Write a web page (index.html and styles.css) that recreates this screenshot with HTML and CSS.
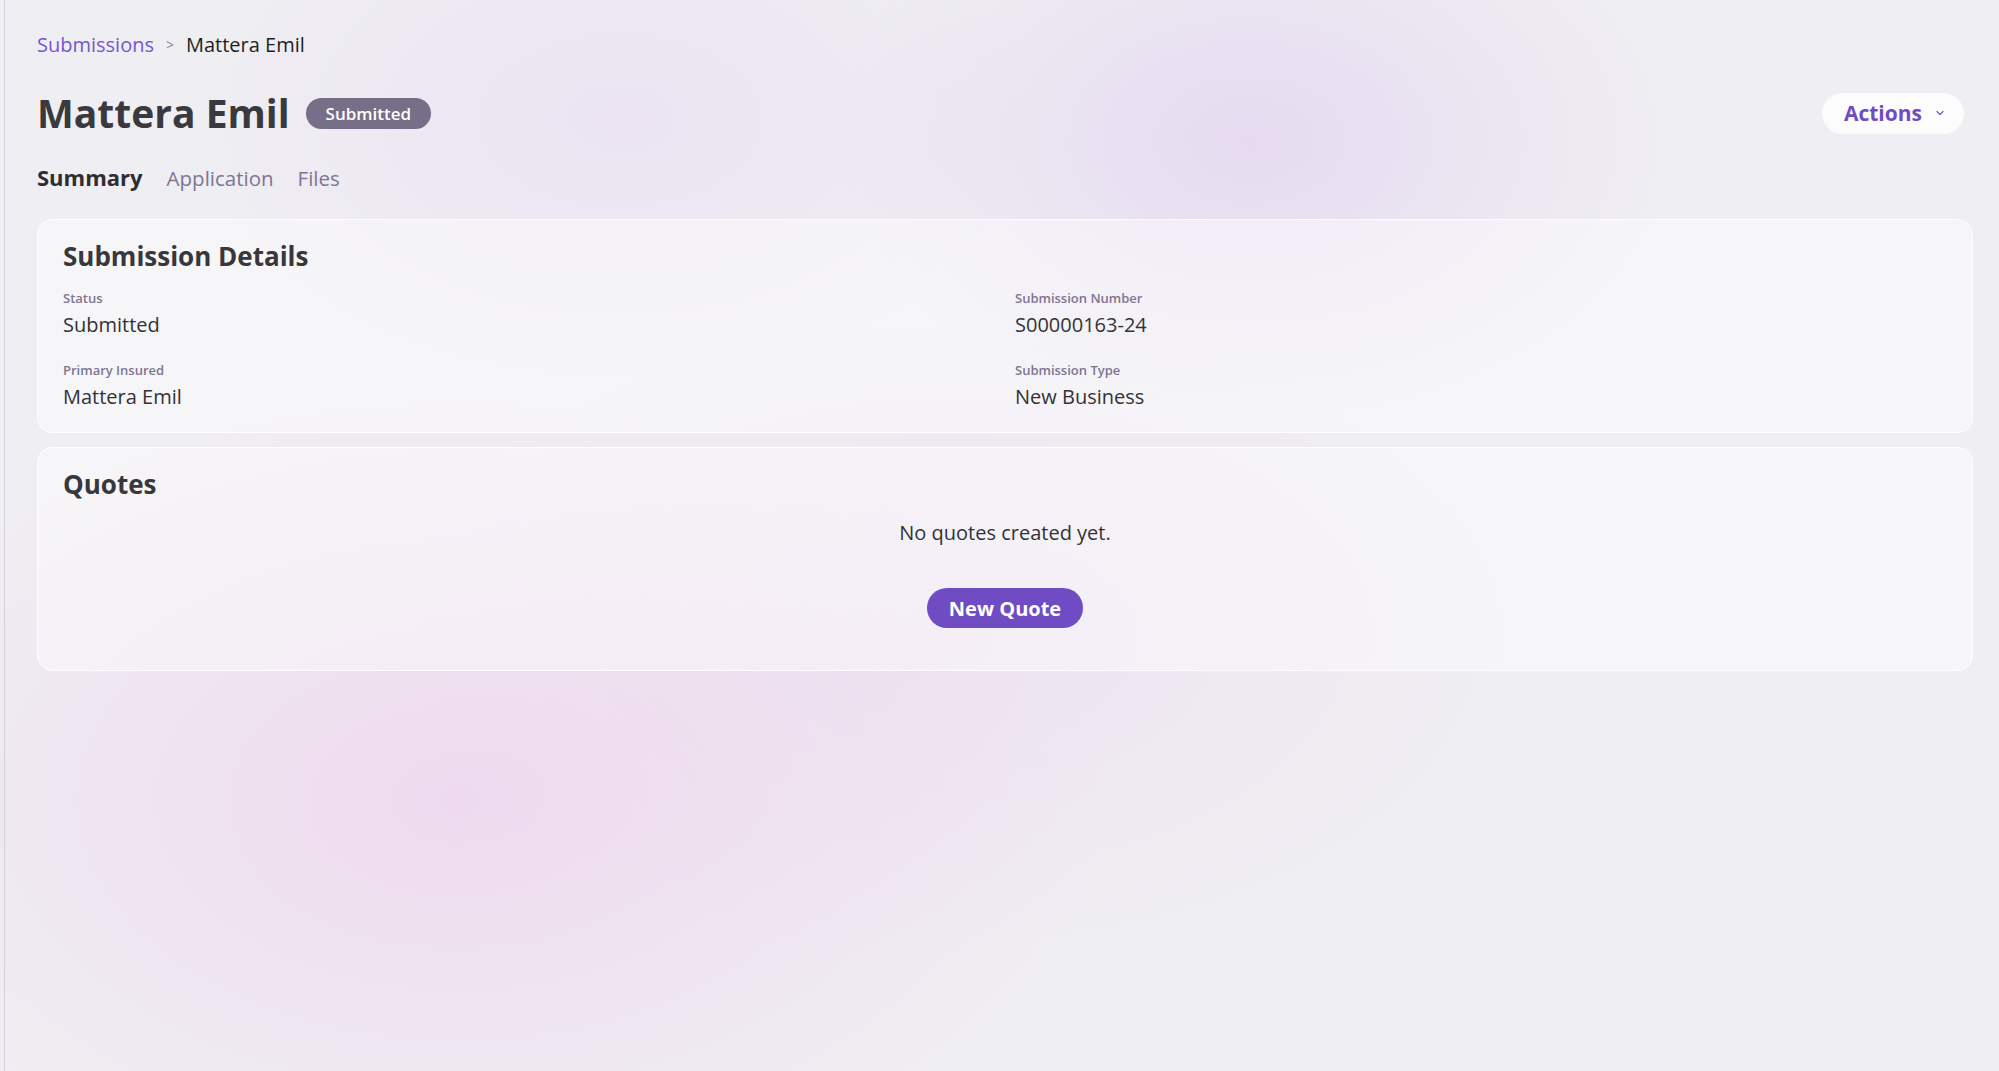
FILE: index.html
```html
<!DOCTYPE html>
<html>
<head>
    <title>Mattera Emil - Submission</title>
    <link rel="stylesheet" href="styles.css">
</head>
<body>
    <div class="shell">
        <div class="rail"></div>
        <main class="page">
            <nav class="crumbs">
                <a href="#" class="crumb-link">Submissions</a>
                <span class="crumb-sep">&gt;</span>
                <span class="crumb-current">Mattera Emil</span>
            </nav>

            <header class="title-row">
                <div class="title-left">
                    <h1>Mattera Emil</h1>
                    <span class="badge">Submitted</span>
                </div>
                <button class="actions">
                    Actions
                    <svg width="12" height="12" viewBox="0 0 12 12"><path d="M3 4.5 L6 7.5 L9 4.5" fill="none" stroke="#7b5fd0" stroke-width="1.3" stroke-linecap="round" stroke-linejoin="round"/></svg>
                </button>
            </header>

            <div class="tabs">
                <a href="#" class="tab active">Summary</a>
                <a href="#" class="tab">Application</a>
                <a href="#" class="tab">Files</a>
            </div>

            <section class="card">
                <h2>Submission Details</h2>
                <div class="details">
                    <div class="field">
                        <div class="field-label">Status</div>
                        <div class="field-value">Submitted</div>
                    </div>
                    <div class="field">
                        <div class="field-label">Submission Number</div>
                        <div class="field-value">S00000163-24</div>
                    </div>
                    <div class="field">
                        <div class="field-label">Primary Insured</div>
                        <div class="field-value">Mattera Emil</div>
                    </div>
                    <div class="field">
                        <div class="field-label">Submission Type</div>
                        <div class="field-value">New Business</div>
                    </div>
                </div>
            </section>

            <section class="card quotes">
                <h2>Quotes</h2>
                <div class="empty">
                    <p>No quotes created yet.</p>
                    <button class="primary">New Quote</button>
                </div>
            </section>
        </main>
    </div>
</body>
</html>
```

FILE: styles.css
```css
:root {
    --bg-color: #efeef2;
    --text-color: #3b3a3f;
    --muted-color: #7d7591;
    --purple: #6f4cc4;
    --link-color: #7656cf;
    --card-bg: rgba(255, 255, 255, 0.42);
    --card-border: rgba(255, 255, 255, 0.85);
}
html, body {
    height: 100%;
}
body {
    margin: 0;
    font-family: "Open Sans", "Noto Sans", Arial, sans-serif;
    color: var(--text-color);
    background-color: var(--bg-color);
    background-image:
        radial-gradient(ellipse 420px 280px at 1250px 140px, rgba(226, 210, 240, 0.7), rgba(226, 210, 240, 0) 100%),
        radial-gradient(ellipse 420px 260px at 620px 120px, rgba(232, 220, 242, 0.6), rgba(232, 220, 242, 0) 100%),
        radial-gradient(ellipse 640px 400px at 460px 800px, rgba(238, 214, 238, 0.85), rgba(238, 214, 238, 0) 100%),
        radial-gradient(ellipse 560px 320px at 950px 640px, rgba(236, 220, 240, 0.6), rgba(236, 220, 240, 0) 100%);
}
.shell {
    display: flex;
    min-height: 100%;
}
.rail {
    width: 4px;
    flex-shrink: 0;
    border-right: 1px solid #d4d1da;
}
.page {
    flex: 1;
    padding: 31px 26px 40px 32px;
}
.crumbs {
    display: flex;
    align-items: center;
    gap: 12px;
    font-size: 20px;
    line-height: 28px;
}
.crumb-link {
    color: var(--link-color);
    text-decoration: none;
}
.crumb-sep {
    color: #8a8595;
    font-size: 14px;
}
.crumb-current {
    color: #1e1e22;
}
.title-row {
    display: flex;
    align-items: center;
    justify-content: space-between;
    margin-top: 30px;
    padding-right: 9px;
}
.title-left {
    display: flex;
    align-items: center;
    gap: 16px;
}
h1 {
    margin: 0;
    font-size: 39px;
    line-height: 48px;
    font-weight: 700;
    color: #3a393e;
}
.badge {
    display: inline-block;
    background-color: #776e87;
    color: #fff;
    font-size: 17px;
    font-weight: 600;
    line-height: 31px;
    padding: 0 20px;
    border-radius: 16px;
}
.actions {
    display: flex;
    align-items: center;
    gap: 12px;
    height: 41px;
    padding: 0 18px 0 22px;
    border: none;
    border-radius: 21px;
    background-color: rgba(255, 255, 255, 0.8);
    color: var(--purple);
    font-family: inherit;
    font-size: 21px;
    font-weight: 700;
    cursor: pointer;
}
.tabs {
    display: flex;
    align-items: baseline;
    gap: 24px;
    margin-top: 25px;
}
.tab {
    font-size: 20.5px;
    line-height: 30px;
    color: var(--muted-color);
    text-decoration: none;
}
.tab.active {
    font-size: 22px;
    color: #2e2d33;
    font-weight: 700;
}
.card {
    margin-top: 26px;
    background-color: var(--card-bg);
    border: 1px solid var(--card-border);
    border-radius: 16px;
    padding: 18px 25px 21px 25px;
}
.card + .card {
    margin-top: 14px;
}
h2 {
    margin: 0;
    font-size: 26px;
    line-height: 36px;
    font-weight: 700;
    color: #38373c;
}
.details {
    display: grid;
    grid-template-columns: 1fr 1fr;
    column-gap: 20px;
    row-gap: 22px;
    margin-top: 15px;
}
.field-label {
    font-size: 13px;
    line-height: 18px;
    font-weight: 600;
    color: var(--muted-color);
}
.field-value {
    margin-top: 4px;
    font-size: 20px;
    line-height: 28px;
    color: #333237;
}
.quotes {
    padding-bottom: 42px;
}
.empty {
    display: flex;
    flex-direction: column;
    align-items: center;
}
.empty p {
    margin: 17px 0 0 0;
    font-size: 20px;
    line-height: 28px;
    color: #333237;
}
.primary {
    margin-top: 41px;
    height: 40px;
    padding: 0 22px;
    border: none;
    border-radius: 20px;
    background-color: var(--purple);
    color: #fff;
    font-family: inherit;
    font-size: 20px;
    font-weight: 700;
    cursor: pointer;
}
```
